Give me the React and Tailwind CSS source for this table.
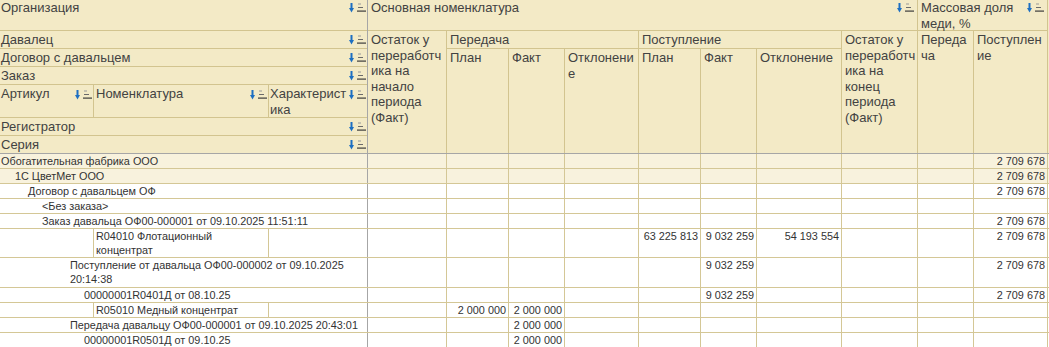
import React from 'react';

// Sort marker used in the report header (blue arrow + stacked lines)
const SortIcon = ({ className = '' }) => (
  <svg width="17" height="10" viewBox="0 0 17 10" className={`shrink-0 ${className}`}>
    <rect x="1.5" y="0" width="2" height="6" fill="#1d6fc2" />
    <polygon points="0,5 5,5 2.5,9.5" fill="#1d6fc2" />
    <rect x="9" y="0.5" width="3" height="1" fill="#9a9a9a" />
    <rect x="9" y="4" width="5" height="1" fill="#6a6a6a" />
    <rect x="8" y="7.5" width="9" height="1.2" fill="#3c3c3c" />
  </svg>
);

const cols = [
  'w-[79px]',
  'w-[62px]',
  'w-[56px]',
  'w-[74px]',
  'w-[62px]',
  'w-[56px]',
  'w-[85px]',
  'w-[76px]',
  'w-[56px]',
  'w-[74px]',
];

const TOTAL = '2 709 678';

const rows = [
  { text: ['Обогатительная фабрика ООО'], pad: 'pl-[1px]', h: 'h-[15px]', bg: 'bg-[#f8f2dd]', vals: { 9: TOTAL } },
  { text: ['1С ЦветМет ООО'], pad: 'pl-[15px]', h: 'h-[15px]', bg: 'bg-[#f8f2dd]', vals: { 9: TOTAL } },
  { text: ['Договор с давальцем ОФ'], pad: 'pl-[28px]', h: 'h-[15px]', vals: { 9: TOTAL } },
  { text: ['<Без заказа>'], pad: 'pl-[42px]', h: 'h-[15px]', vals: {} },
  { text: ['Заказ давальца ОФ00-000001 от 09.10.2025 11:51:11'], pad: 'pl-[42px]', h: 'h-[15px]', vals: { 9: TOTAL } },
  {
    split: ['R04010 Флотационный', 'концентрат'],
    h: 'h-[29px]',
    vals: { 4: '63 225 813', 5: '9 032 259', 6: '54 193 554', 9: TOTAL },
  },
  {
    text: ['Поступление от давальца ОФ00-000002 от 09.10.2025', '20:14:38'],
    pad: 'pl-[70px]',
    h: 'h-[30px]',
    vals: { 5: '9 032 259', 9: TOTAL },
  },
  { text: ['00000001R0401Д от 08.10.25'], pad: 'pl-[84px]', h: 'h-[15px]', vals: { 5: '9 032 259', 9: TOTAL } },
  { split: ['R05010 Медный концентрат'], h: 'h-[15px]', vals: { 1: '2 000 000', 2: '2 000 000' } },
  { text: ['Передача давальцу ОФ00-000001 от 09.10.2025 20:43:01'], pad: 'pl-[70px]', h: 'h-[15px]', vals: { 2: '2 000 000' } },
  { text: ['00000001R0501Д от 09.10.25'], pad: 'pl-[84px]', h: 'h-[15px]', vals: { 2: '2 000 000' } },
];

const Lines = ({ lines }) => (
  <>
    {lines.map((l, i) => (
      <div key={i} className="whitespace-nowrap">
        {l}
      </div>
    ))}
  </>
);

const LeftRow = ({ label, h, last }) => (
  <div
    className={`${h} flex items-start pl-[1px] pr-[1px] leading-[17px] ${last ? '' : 'border-b border-[#d2c48f]'}`}
  >
    <span className="whitespace-nowrap">{label}</span>
    <SortIcon className="ml-auto mt-[4px]" />
  </div>
);

const Header = () => (
  <div className="flex bg-[#f3eac6] text-[13px] leading-[15.5px] text-[#424242] border-b border-[#a6a6a6]">
    {/* grouping fields */}
    <div className="w-[368px] shrink-0 flex flex-col border-r border-[#a6a6a6]">
      <div className="h-[31px] flex items-start pl-[1px] pr-[1px] border-b border-[#d2c48f]">
        <span>Организация</span>
        <SortIcon className="ml-auto mt-[3px]" />
      </div>
      <LeftRow label="Давалец" h="h-[18px]" />
      <LeftRow label="Договор с давальцем" h="h-[18px]" />
      <LeftRow label="Заказ" h="h-[18px]" />
      <div className="h-[33px] flex border-b border-[#d2c48f] leading-[16px]">
        <div className="w-[94px] flex items-start pt-[1px] pl-[1px] pr-[1px] border-r border-[#d2c48f]">
          <span>Артикул</span>
          <SortIcon className="ml-auto mt-[4px]" />
        </div>
        <div className="w-[175px] flex items-start pt-[1px] pl-[2px] pr-[1px] border-r border-[#d2c48f]">
          <span>Номенклатура</span>
          <SortIcon className="ml-auto mt-[4px]" />
        </div>
        <div className="flex-1 flex items-start pt-[1px] pl-[1px] pr-[1px]">
          <div>
            <Lines lines={['Характерист', 'ика']} />
          </div>
          <SortIcon className="ml-auto mt-[4px]" />
        </div>
      </div>
      <LeftRow label="Регистратор" h="h-[18px]" />
      <LeftRow label="Серия" h="h-[17px]" last />
    </div>

    {/* resource columns */}
    <div className="flex flex-col">
      <div className="h-[31px] flex border-b border-[#d2c48f]">
        <div className="w-[550px] flex items-start pl-[3px] pr-[3px] border-r border-[#d2c48f]">
          <span>Основная номенклатура</span>
          <SortIcon className="ml-auto mt-[3px]" />
        </div>
        <div className="w-[130px] flex items-start pl-[3px] pr-[3px] border-r border-[#d2c48f] leading-[16px]">
          <div>
            <Lines lines={['Массовая доля', 'меди, %']} />
          </div>
          <SortIcon className="ml-auto mt-[3px]" />
        </div>
      </div>
      <div className="h-[122px] flex">
        <div className={`${cols[0]} pl-[3px] pt-[1px] border-r border-[#d2c48f] overflow-hidden`}>
          <Lines lines={['Остаток у', 'переработч', 'ика на', 'начало', 'периода', '(Факт)']} />
        </div>
        <div className="w-[192px] flex flex-col">
          <div className="h-[18px] pl-[3px] pt-[1px] border-b border-r border-[#d2c48f]">Передача</div>
          <div className="flex-1 flex">
            <div className={`${cols[1]} pl-[3px] pt-[1px] border-r border-[#d2c48f]`}>План</div>
            <div className={`${cols[2]} pl-[3px] pt-[1px] border-r border-[#d2c48f]`}>Факт</div>
            <div className={`${cols[3]} pl-[3px] pt-[1px] border-r border-[#d2c48f]`}>
              <Lines lines={['Отклонени', 'е']} />
            </div>
          </div>
        </div>
        <div className="w-[203px] flex flex-col">
          <div className="h-[18px] pl-[3px] pt-[1px] border-b border-r border-[#d2c48f]">Поступление</div>
          <div className="flex-1 flex">
            <div className={`${cols[4]} pl-[3px] pt-[1px] border-r border-[#d2c48f]`}>План</div>
            <div className={`${cols[5]} pl-[3px] pt-[1px] border-r border-[#d2c48f]`}>Факт</div>
            <div className={`${cols[6]} pl-[3px] pt-[1px] border-r border-[#d2c48f]`}>Отклонение</div>
          </div>
        </div>
        <div className={`${cols[7]} pl-[3px] pt-[1px] border-r border-[#d2c48f] overflow-hidden`}>
          <Lines lines={['Остаток у', 'переработч', 'ика на', 'конец', 'периода', '(Факт)']} />
        </div>
        <div className={`${cols[8]} pl-[3px] pt-[1px] border-r border-[#d2c48f]`}>
          <Lines lines={['Переда', 'ча']} />
        </div>
        <div className={`${cols[9]} pl-[3px] pt-[1px] border-r border-[#d2c48f]`}>
          <Lines lines={['Поступлен', 'ие']} />
        </div>
      </div>
    </div>
  </div>
);

const BodyRow = ({ row }) => (
  <div className={`${row.h} ${row.bg || 'bg-white'} flex border-b border-[#d4c796]`}>
    {row.split ? (
      <div className="w-[368px] shrink-0 flex border-r border-[#a6a6a6]">
        <div className="w-[94px] border-r border-[#d4c796]" />
        <div className="w-[175px] pl-[2px] border-r border-[#d4c796]">
          <Lines lines={row.split} />
        </div>
        <div className="flex-1" />
      </div>
    ) : (
      <div className={`w-[368px] shrink-0 ${row.pad} border-r border-[#a6a6a6]`}>
        <Lines lines={row.text} />
      </div>
    )}
    {cols.map((w, i) => (
      <div key={i} className={`${w} shrink-0 text-right pr-[2px] border-r border-[#d4c796] whitespace-nowrap`}>
        {row.vals[i] || ''}
      </div>
    ))}
  </div>
);

export default function App() {
  return (
    <div className="w-[1049px] h-[347px] overflow-hidden bg-white font-['Liberation_Sans',Arial,sans-serif]">
      <Header />
      <div className="text-[10.85px] leading-[14px] text-[#333333]">
        {rows.map((r, i) => (
          <BodyRow key={i} row={r} />
        ))}
      </div>
    </div>
  );
}
